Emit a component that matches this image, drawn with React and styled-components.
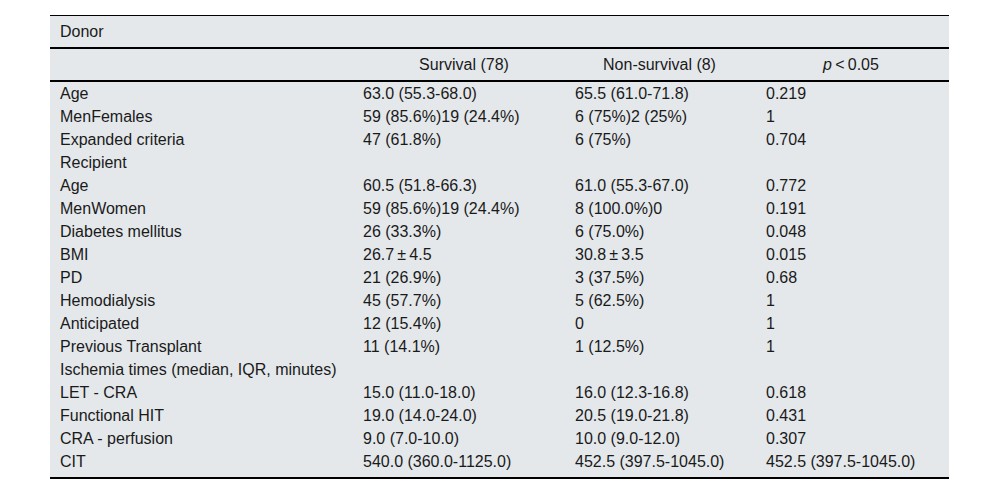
import React from "react";
import styled, { createGlobalStyle } from "styled-components";

const Global = createGlobalStyle`
  html, body { margin: 0; padding: 0; background: #ffffff; }
  body { font-family: "Liberation Sans", Arial, sans-serif; }
`;

const Page = styled.div`
  padding: 15px 51px 0 50px;
`;

const Table = styled.table`
  width: 899px;
  border-collapse: collapse;
  table-layout: fixed;
  background: #e4e8eb;
  color: #1a1a1a;
  font-size: 16px;
  border-top: 1px solid #000;
  border-bottom: 2px solid #000;
`;

const SectionRow = styled.tr`
  border-bottom: 2px solid #000;
`;

const SectionCell = styled.td`
  height: 31px;
  padding: 0 10px;
  vertical-align: middle;
  line-height: 18px;
`;

const HeadRow = styled.tr`
  border-bottom: 2px solid #000;
`;

const HeadCell = styled.th`
  height: 31px;
  padding: 0 ${(p) => p.$pr ?? 10}px 0 ${(p) => p.$pl ?? 10}px;
  font-weight: normal;
  text-align: center;
  vertical-align: middle;
  line-height: 18px;
  white-space: nowrap;
`;

const Row = styled.tr``;

const Cell = styled.td`
  height: 23px;
  padding: 0 10px;
  vertical-align: middle;
  text-align: left;
  white-space: nowrap;
  line-height: 18px;
`;

const Spacer = styled.td`
  height: 4px;
  padding: 0;
`;

const rows = [
  ["Age", "63.0 (55.3-68.0)", "65.5 (61.0-71.8)", "0.219"],
  ["MenFemales", "59 (85.6%)19 (24.4%)", "6 (75%)2 (25%)", "1"],
  ["Expanded criteria", "47 (61.8%)", "6 (75%)", "0.704"],
  ["Recipient", "", "", ""],
  ["Age", "60.5 (51.8-66.3)", "61.0 (55.3-67.0)", "0.772"],
  ["MenWomen", "59 (85.6%)19 (24.4%)", "8 (100.0%)0", "0.191"],
  ["Diabetes mellitus", "26 (33.3%)", "6 (75.0%)", "0.048"],
  ["BMI", "26.7\u2009\u00b1\u20094.5", "30.8\u2009\u00b1\u20093.5", "0.015"],
  ["PD", "21 (26.9%)", "3 (37.5%)", "0.68"],
  ["Hemodialysis", "45 (57.7%)", "5 (62.5%)", "1"],
  ["Anticipated", "12 (15.4%)", "0", "1"],
  ["Previous Transplant", "11 (14.1%)", "1 (12.5%)", "1"],
  ["Ischemia times (median, IQR, minutes)", "", "", ""],
  ["LET - CRA", "15.0 (11.0-18.0)", "16.0 (12.3-16.8)", "0.618"],
  ["Functional HIT", "19.0 (14.0-24.0)", "20.5 (19.0-21.8)", "0.431"],
  ["CRA - perfusion", "9.0 (7.0-10.0)", "10.0 (9.0-12.0)", "0.307"],
  ["CIT", "540.0 (360.0-1125.0)", "452.5 (397.5-1045.0)", "452.5 (397.5-1045.0)"],
];

export default function App() {
  return (
    <>
      <Global />
      <Page>
        <Table>
          <colgroup>
            <col style={{ width: 303 }} />
            <col style={{ width: 212 }} />
            <col style={{ width: 191 }} />
            <col style={{ width: 193 }} />
          </colgroup>
          <thead>
            <SectionRow>
              <SectionCell colSpan={4}>Donor</SectionCell>
            </SectionRow>
            <HeadRow>
              <HeadCell />
              <HeadCell $pl={20}>Survival (78)</HeadCell>
              <HeadCell $pr={12}>Non-survival (8)</HeadCell>
              <HeadCell $pr={13}>
                <i>p</i>&thinsp;&lt;&thinsp;0.05
              </HeadCell>
            </HeadRow>
          </thead>
          <tbody>
            {rows.map((r, i) => (
              <Row key={i}>
                {r.map((c, j) => (
                  <Cell key={j}>{c}</Cell>
                ))}
              </Row>
            ))}
            <Row>
              <Spacer colSpan={4} />
            </Row>
          </tbody>
        </Table>
      </Page>
    </>
  );
}
